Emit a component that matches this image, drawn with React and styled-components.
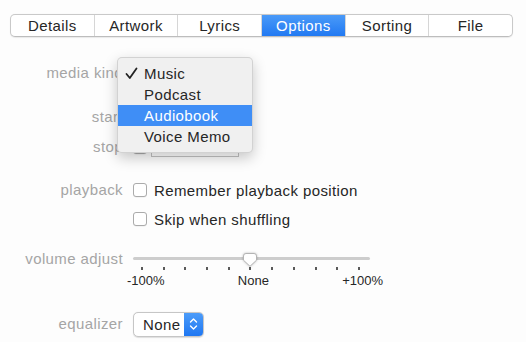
import React from "react";
import styled, { createGlobalStyle } from "styled-components";

const Global = createGlobalStyle`
  html, body { margin: 0; padding: 0; background: #fdfdfd; }
  body { font-family: "Liberation Sans", Arial, sans-serif; -webkit-font-smoothing: antialiased; }
  * { box-sizing: border-box; }
`;

const Page = styled.div`
  position: relative;
  width: 526px;
  height: 342px;
  overflow: hidden;
  background: #fdfdfd;
  padding-top: 14px;
`;

const TabBar = styled.div`
  display: flex;
  margin-left: 10px;
  width: 503px;
  height: 23px;
  border: 1px solid #c9c9c9;
  border-bottom-color: #bdbdbd;
  border-radius: 5px;
  background: #fff;
  overflow: hidden;
  box-shadow: 0 0.5px 1px rgba(0, 0, 0, 0.08);
`;

const Tab = styled.div`
  flex: 1;
  display: flex;
  align-items: center;
  justify-content: center;
  font-size: 15px;
  letter-spacing: 0.4px;
  color: ${(p) => (p.$active ? "#fff" : "#262626")};
  background: ${(p) =>
    p.$active ? "linear-gradient(#4a9af8, #2179f2)" : "transparent"};
  border-left: 1px solid ${(p) => (p.$first ? "transparent" : "#d6d6d6")};
  ${(p) => p.$first && "border-left: none;"}
`;

const Form = styled.div`
  display: flex;
  flex-direction: column;
`;

const Row = styled.div`
  display: grid;
  grid-template-columns: 123px 1fr;
  column-gap: 10px;
  align-items: ${(p) => (p.$top ? "start" : "center")};
  height: ${(p) => p.$h || 26}px;
  margin-top: ${(p) => p.$mt || 0}px;
`;

const Label = styled.div`
  text-align: right;
  font-size: 15px;
  letter-spacing: 0.4px;
  line-height: 26px;
  color: #a5a5a5;
  white-space: nowrap;
`;

const Controls = styled.div`
  display: flex;
  align-items: center;
  gap: 4px;
`;

const Check = styled.span`
  display: inline-block;
  width: 14px;
  height: 14px;
  border: 1px solid #ababab;
  border-radius: 3px;
  background: #fff;
  box-shadow: 0 0.5px 0.5px rgba(0, 0, 0, 0.08);
  flex: none;
`;

const CheckLabel = styled.label`
  display: flex;
  align-items: center;
  gap: 7px;
  font-size: 15px;
  letter-spacing: 0.4px;
  color: #262626;
`;

const Field = styled.div`
  width: 88px;
  height: 20px;
  border: 1px solid #c3c3c3;
  border-top-color: #b5b5b5;
  background: #fff;
`;

const PopButton = styled.div`
  display: flex;
  align-items: stretch;
  width: ${(p) => p.$w}px;
  height: 25px;
  border: 1px solid #c6c6c6;
  border-radius: 5px;
  background: #fff;
  overflow: hidden;
  box-shadow: 0 0.5px 1px rgba(0, 0, 0, 0.12);
`;

const PopText = styled.span`
  flex: 1;
  display: flex;
  align-items: center;
  padding-left: 9px;
  font-size: 15px;
  letter-spacing: 0.4px;
  color: #262626;
`;

const Stepper = styled.span`
  width: 19px;
  display: flex;
  align-items: center;
  justify-content: center;
  background: linear-gradient(#4c9cf9, #1f77f2);
`;

const SliderBox = styled.div`
  position: relative;
  width: 237px;
  padding-top: 11px;
`;

const Track = styled.div`
  position: relative;
  height: 3px;
  border-radius: 2px;
  background: #cdcdcd;
`;

const Thumb = styled.svg`
  position: absolute;
  top: -4px;
  filter: drop-shadow(0 0.5px 0.8px rgba(0, 0, 0, 0.25));
`;

const Ticks = styled.div`
  display: flex;
  justify-content: space-between;
  padding: 0 10px 0 8px;
  margin-top: 7px;
`;

const Tick = styled.span`
  width: 2px;
  height: 3px;
  background: #5a5a5a;
`;

const TickLabels = styled.div`
  display: flex;
  justify-content: space-between;
  margin: 4px -13px 0 -6px;
  font-size: 13px;
  line-height: 14px;
  color: #262626;
`;

const Menu = styled.div`
  position: absolute;
  left: 117px;
  top: 57px;
  width: 136px;
  padding: 5px 0;
  background: #f0f0f0;
  border: 1px solid rgba(0, 0, 0, 0.12);
  border-radius: 5px;
  box-shadow: 0 5px 14px rgba(0, 0, 0, 0.22);
`;

const MenuItem = styled.div`
  display: flex;
  align-items: center;
  height: 21px;
  padding-left: 7px;
  font-size: 15px;
  letter-spacing: 0.4px;
  color: ${(p) => (p.$hl ? "#fff" : "#262626")};
  background: ${(p) => (p.$hl ? "#3f8ef6" : "transparent")};
`;

const CheckCol = styled.span`
  width: 19px;
  display: flex;
  align-items: center;
`;

const tabs = ["Details", "Artwork", "Lyrics", "Options", "Sorting", "File"];
const items = ["Music", "Podcast", "Audiobook", "Voice Memo"];

export default function App() {
  const thumbPos = 117 - 7; // center 250 relative to track start 133
  return (
    <>
      <Global />
      <Page>
        <TabBar>
          {tabs.map((t, i) => (
            <Tab key={t} $first={i === 0} $active={t === "Options"}>
              {t}
            </Tab>
          ))}
        </TabBar>
        <Form>
          <Row $mt={23}>
            <Label>media kind</Label>
            <Controls>
              <PopButton $w={110}>
                <PopText>Music</PopText>
                <Stepper />
              </PopButton>
            </Controls>
          </Row>
          <Row $mt={18}>
            <Label>start</Label>
            <Controls>
              <Check />
              <Field />
            </Controls>
          </Row>
          <Row $mt={4}>
            <Label>stop</Label>
            <Controls>
              <Check />
              <Field />
            </Controls>
          </Row>
          <Row $mt={17}>
            <Label>playback</Label>
            <Controls>
              <CheckLabel>
                <Check />
                Remember playback position
              </CheckLabel>
            </Controls>
          </Row>
          <Row $mt={3}>
            <Label />
            <Controls>
              <CheckLabel>
                <Check />
                Skip when shuffling
              </CheckLabel>
            </Controls>
          </Row>
          <Row $mt={14} $h={44} $top>
            <Label>volume adjust</Label>
            <SliderBox>
              <Track>
                <Thumb
                  width="14"
                  height="14"
                  viewBox="0 0 14 14"
                  style={{ left: thumbPos }}
                >
                  <path
                    d="M3,0.5 H11 Q13.5,0.5 13.5,3 V7.2 L7,13.3 L0.5,7.2 V3 Q0.5,0.5 3,0.5 Z"
                    fill="#fff"
                    stroke="#b4b4b4"
                    strokeWidth="1"
                  />
                </Thumb>
              </Track>
              <Ticks>
                {Array.from({ length: 11 }).map((_, i) => (
                  <Tick key={i} />
                ))}
              </Ticks>
              <TickLabels>
                <span>-100%</span>
                <span>None</span>
                <span>+100%</span>
              </TickLabels>
            </SliderBox>
          </Row>
          <Row $mt={21}>
            <Label>equalizer</Label>
            <Controls>
              <PopButton $w={71}>
                <PopText>None</PopText>
                <Stepper>
                  <svg width="9" height="14" viewBox="0 0 9 14">
                    <path
                      d="M1.5,5 L4.5,2 L7.5,5 M1.5,9 L4.5,12 L7.5,9"
                      fill="none"
                      stroke="#fff"
                      strokeWidth="1.4"
                      strokeLinecap="round"
                      strokeLinejoin="round"
                    />
                  </svg>
                </Stepper>
              </PopButton>
            </Controls>
          </Row>
        </Form>
        <Menu>
          {items.map((it, i) => (
            <MenuItem key={it} $hl={it === "Audiobook"}>
              <CheckCol>
                {i === 0 && (
                  <svg width="13" height="13" viewBox="0 0 13 13">
                    <path
                      d="M1.5,7 L4.8,11 L11.5,1.5"
                      fill="none"
                      stroke="#222"
                      strokeWidth="1.8"
                      strokeLinecap="round"
                      strokeLinejoin="round"
                    />
                  </svg>
                )}
              </CheckCol>
              {it}
            </MenuItem>
          ))}
        </Menu>
      </Page>
    </>
  );
}
